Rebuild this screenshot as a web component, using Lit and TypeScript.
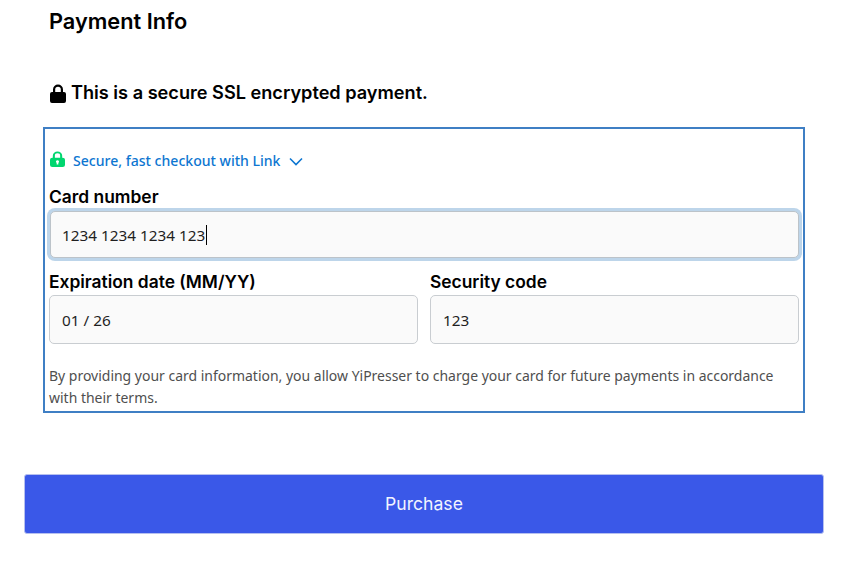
import { LitElement, html, css } from "lit";
import { customElement } from "lit/decorators.js";

@customElement("app-root")
export class AppRoot extends LitElement {
  static styles = css`
    :host { display: block; width: 846px; height: 568px; background: #fff; font-family: Inter, "Liberation Sans", sans-serif; color: #000; overflow: hidden; }
    .page { display: flex; flex-direction: column; padding: 0 22px 0 24px; }
    h2 { margin: 9px 0 0 25px; font-size: 21.75px; line-height: 25px; font-weight: 600; letter-spacing: 0; }
    .secure { display: flex; align-items: center; gap: 5px; margin: 46px 0 0 26px; font-size: 18.15px; line-height: 24px; font-weight: 600; height: 24px; }
    .secure svg { width: 16px; height: 19px; display: block; margin-top: 2px; }
    .box { margin: 23px 19px 0 19px; border: 2px solid #3f7fc4; padding: 22px 4px 4px 4px; height: 286px; box-sizing: border-box; }
    .link { display: flex; align-items: center; font-family: "Noto Sans", sans-serif; font-size: 14.05px; line-height: 20px; color: #0d76d1; font-weight: 500; height: 20px; }
    .link .lk { width: 15px; height: 16px; margin: -5px 8px 0 1px; display: block; }
    .link .chev { width: 14px; height: 9px; margin-left: 9px; display: block; }
    label { display: block; font-size: 17.4px; line-height: 20px; font-weight: 600; }
    .card-label { margin-top: 16px; }
    .input { box-sizing: border-box; height: 49px; margin-top: 2px; border: 1px solid #c9cdd1; border-radius: 5px; background: #fafafa; padding: 0 12px; display: flex; align-items: center; font-family: "Noto Sans", sans-serif; font-size: 15.3px; color: #1f1f1f; }
    .focus { height: 47px; margin: 4px 0 0 1px; box-shadow: 0 0 0 3px #bdd5ea; border-color: #bcc3c9; padding-left: 11px; }
    .caret { display: inline-block; width: 1px; height: 20px; background: #000; margin-left: 1px; }
    .row { display: grid; grid-template-columns: 369px 369px; column-gap: 12px; margin-top: 14px; }
    .row .input { margin-top: 3px; }
    .note { margin: 21px 0 0; font-family: "Noto Sans", sans-serif; font-size: 13.98px; line-height: 22px; color: #4f4f4f; }
    button { margin-top: 61px; height: 60px; padding: 0 0 2px; border: 1px solid #b6c0ef; border-radius: 3px; background: #3a58e8; color: #f2f4ff; font-family: Inter, sans-serif; font-size: 17.6px; font-weight: 400; width: 800px; }
  `;

  render() {
    return html`<div class="page">
      <h2>Payment Info</h2>
      <div class="secure">
        <svg viewBox="0 0 16 19"><path fill="#000" fill-rule="evenodd" d="M3 8V5.5a5 5 0 0 1 10 0V8h1a2 2 0 0 1 2 2v7a2 2 0 0 1-2 2H2a2 2 0 0 1-2-2v-7a2 2 0 0 1 2-2h1Zm2.2 0h5.600V5.500a2.800 2.800 0 0 0-5.600 0V8Z"/></svg>
        <span>This is a secure SSL encrypted payment.</span>
      </div>
      <div class="box">
        <div class="link">
          <svg class="lk" viewBox="0 0 16 19" preserveAspectRatio="none"><path fill="#00d66f" fill-rule="evenodd" d="M3 8V5.5a5 5 0 0 1 10 0V8h.5A2.5 2.5 0 0 1 16 10.500v6a2.500 2.500 0 0 1-2.500 2.500h-11A2.500 2.500 0 0 1 0 16.500v-6A2.500 2.500 0 0 1 2.500 8H3Zm2.200 0h5.600V5.500a2.800 2.800 0 0 0-5.600 0V8ZM8 11a1.700 1.700 0 0 0-.9 3.100V16h1.800v-1.900A1.700 1.700 0 0 0 8 11Z"/></svg>
          <span>Secure, fast checkout with Link</span>
          <svg class="chev" viewBox="0 0 14 9"><path d="M1 1.500 7 7.500 13 1.500" fill="none" stroke="#0d76d1" stroke-width="1.600"/></svg>
        </div>
        <label class="card-label">Card number</label>
        <div class="input focus"><span>1234 1234 1234 123</span><span class="caret"></span></div>
        <div class="row">
          <div><label>Expiration date (MM/YY)</label><div class="input">01 / 26</div></div>
          <div><label>Security code</label><div class="input">123</div></div>
        </div>
        <p class="note">By providing your card information, you allow YiPresser to charge your card for future payments in accordance with their terms.</p>
      </div>
      <button>Purchase</button>
    </div>`;
  }
}
